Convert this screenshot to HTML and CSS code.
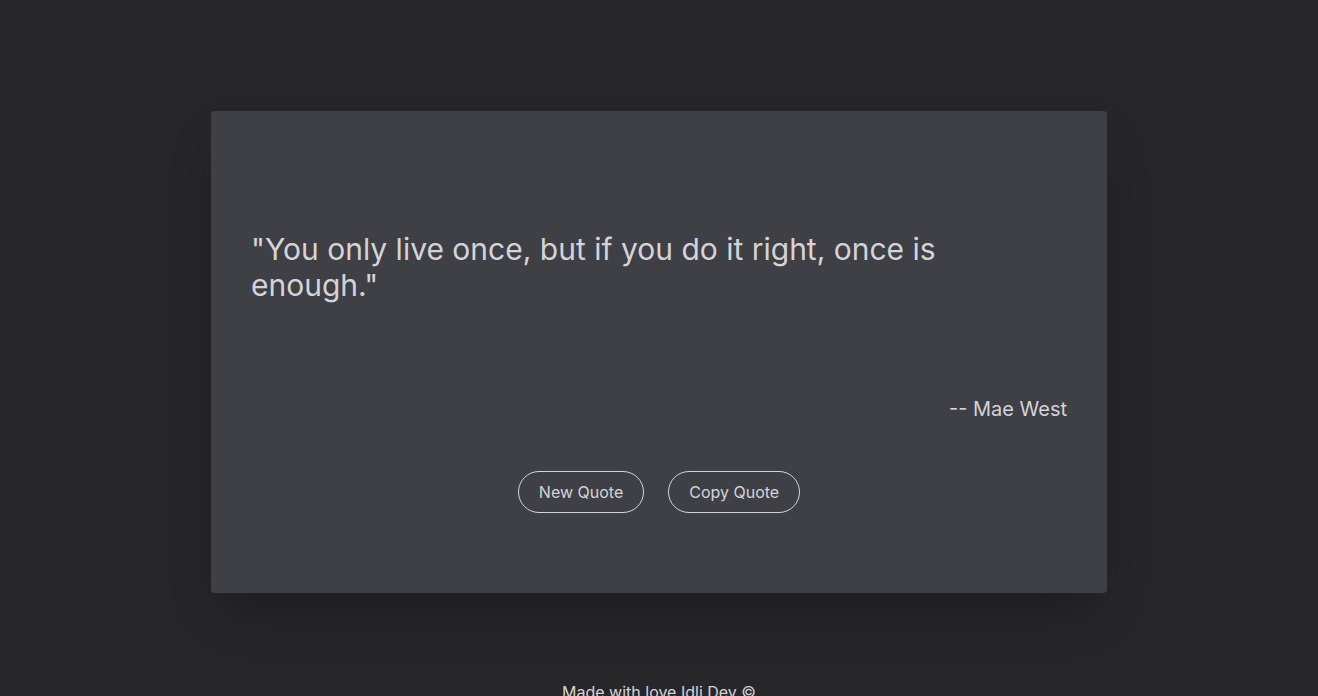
FILE: index.html
```html
<!DOCTYPE html>
<html lang="en">
<head>
    <meta charset="UTF-8">
    <meta name="viewport" content="width=device-width, initial-scale=1.0">
    <title>Quote Generator</title>

    <link rel="stylesheet" href="styles.css">

</head>
<body>

    <main class="page">

        <div class="card">
            <p class="quote">"You only live once, but if you do it right, once is enough."</p>
            <p class="author">-- Mae West</p>

            <div class="actions">
                <button class="btn">New Quote</button>
                <button class="btn">Copy Quote</button>
            </div>
        </div>

        <footer class="footer">Made with love Idli Dev &copy;</footer>

    </main>

</body>
</html>
```

FILE: styles.css
```css
body {
    background-color: #27272a;
    margin: 0;
    font-family: Inter, "Noto Sans", sans-serif;
    color: #d4d4d8;
}

.page {
    display: flex;
    flex-direction: column;
    align-items: center;
    padding-top: 111px;
}

.card {
    background-color: #3f3f46;
    width: 896px;
    box-sizing: border-box;
    padding: 120px 40px 80px;
    border-radius: 4px;
    box-shadow: 0 25px 50px -12px rgba(0, 0, 0, 0.3);
}

.quote {
    margin: 0;
    max-width: 768px;
    font-size: 30px;
    line-height: 36px;
}

.author {
    margin: 92px 0 0;
    text-align: right;
    font-size: 20px;
    line-height: 28px;
}

.actions {
    display: flex;
    justify-content: center;
    gap: 24px;
    margin-top: 48px;
}

.btn {
    background: transparent;
    color: #d4d4d8;
    border: 1px solid #d4d4d8;
    border-radius: 9999px;
    padding: 8px 20px;
    font-family: inherit;
    font-size: 16px;
    line-height: 24px;
    cursor: pointer;
}

.footer {
    margin-top: 87px;
    font-size: 16px;
    line-height: 24px;
}
```
